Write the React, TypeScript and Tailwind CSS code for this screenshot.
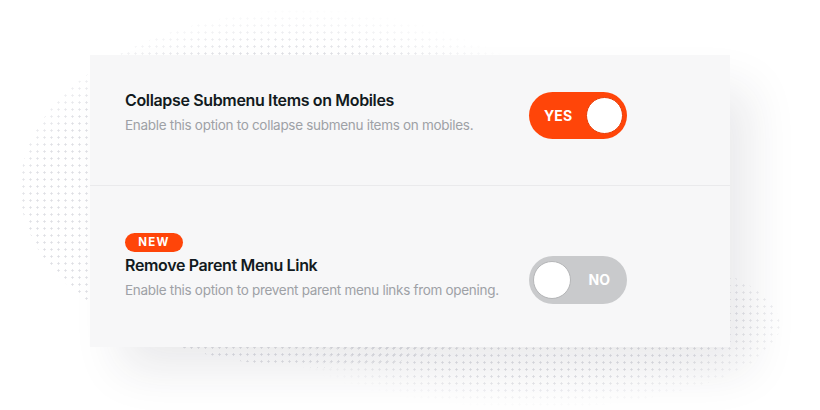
import React from "react";

function Toggle({ on }: { on: boolean }) {
  if (on) {
    return (
      <div className="flex h-[47px] w-[98px] shrink-0 items-center justify-between rounded-full bg-[#ff4509] pl-[15px] pr-[4px]">
        <span className="text-[14px] font-bold leading-none tracking-[0.1px] text-white">YES</span>
        <span className="h-[37px] w-[37px] rounded-full border border-[#e63c06] bg-white" />
      </div>
    );
  }
  return (
    <div className="flex h-[48px] w-[98px] shrink-0 items-center justify-between rounded-full bg-[#c9cacc] pl-[4px] pr-[17px]">
      <span className="h-[38px] w-[38px] rounded-full border border-[#b5b6b8] bg-white" />
      <span className="text-[14px] font-bold leading-none text-white">NO</span>
    </div>
  );
}

function Setting({
  title,
  desc,
  badge,
  on,
  textPad,
  togglePad,
  divider,
  height,
}: {
  title: string;
  desc: string;
  badge?: boolean;
  on: boolean;
  textPad: string;
  togglePad: string;
  divider?: boolean;
  height: string;
}) {
  return (
    <div className={`flex pl-[35px] ${height} ${divider ? "border-b border-[#eaeaec]" : ""}`}>
      <div className={`flex w-[404px] flex-col items-start ${textPad}`}>
        {badge && (
          <span className="mb-[1px] flex h-[19px] w-[58px] items-center justify-center rounded-full bg-[#ff4509] text-[11.5px] font-bold leading-none tracking-[1.2px] text-white">
            NEW
          </span>
        )}
        <div className="text-[16px] font-semibold leading-[24px] tracking-[-0.35px] text-[#121a20]">{title}</div>
        <div className="mt-[3px] text-[13.5px] leading-[20px] tracking-[-0.3px] text-[#9ea1a6]">{desc}</div>
      </div>
      <div className={togglePad}>
        <Toggle on={on} />
      </div>
    </div>
  );
}

export default function App() {
  return (
    <div
      className="relative h-[410px] w-[820px] overflow-hidden bg-white"
      style={{ fontFamily: "Inter, 'Noto Sans', sans-serif" }}
    >
      {/* dotted decorative blobs behind the card */}
      <div className="absolute left-[20px] top-[8px] h-[360px] w-[600px] rounded-[50%] bg-[radial-gradient(circle,#dedfe4_0.9px,transparent_1.3px)] bg-[length:7px_7px] [mask-image:radial-gradient(ellipse_at_45%_55%,black_55%,transparent_71%)]" />
      <div className="absolute left-[250px] top-[240px] h-[170px] w-[530px] rounded-[50%] bg-[radial-gradient(circle,#dedfe4_0.9px,transparent_1.3px)] bg-[length:7px_7px] [mask-image:radial-gradient(ellipse_at_55%_45%,black_45%,transparent_70%)]" />

      <div className="relative ml-[90px] mt-[55px] flex h-[292px] w-[640px] flex-col bg-[#f7f7f8] shadow-[25px_28px_45px_-6px_rgba(40,40,60,0.10)]">
        <Setting
          title="Collapse Submenu Items on Mobiles"
          desc="Enable this option to collapse submenu items on mobiles."
          on
          textPad="pt-[33px]"
          togglePad="pt-[37px]"
          divider
          height="h-[131px]"
        />
        <Setting
          title="Remove Parent Menu Link"
          desc="Enable this option to prevent parent menu links from opening."
          badge
          on={false}
          textPad="pt-[47px]"
          togglePad="pt-[70px]"
          height="flex-1"
        />
      </div>
    </div>
  );
}
